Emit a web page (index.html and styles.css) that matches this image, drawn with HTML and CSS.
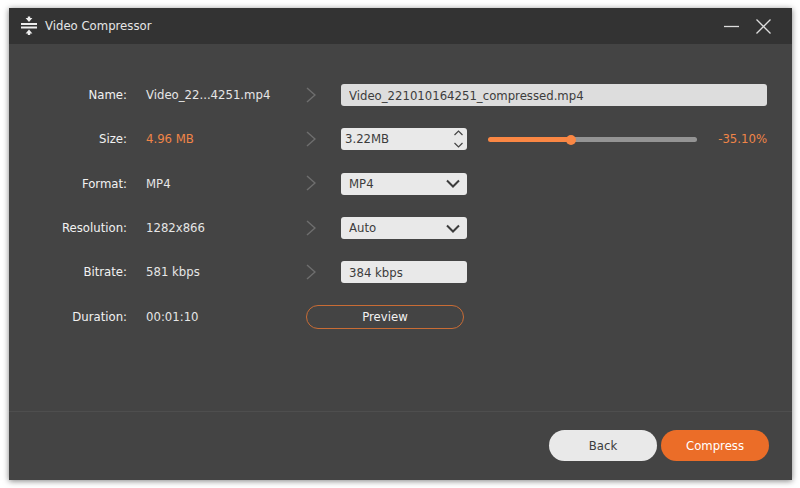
FILE: index.html
```html
<!DOCTYPE html>
<html lang="en">
	<head>
		<meta charset="utf-8">
		<meta name="viewport" content="width=device-width, initial-scale=1">
		<title>Video Compressor</title>
		<link rel="stylesheet" href="styles.css">
	</head>
	<body>
		<div class="window">
			<header class="titlebar">
				<svg class="logo" width="16" height="20" viewBox="0 0 16 20">
					<path d="M0 7h16v2H0zM0 10.6h16v2H0z"/>
					<path d="M6.800 .5h2.400v1.500h2.200L8 6 4.600 2H6.800zM6.800 19h2.400v-1.500h2.200L8 13.500 4.600 17.500H6.800z"/>
				</svg>
				<h1>Video Compressor</h1>
				<button type="button" class="winbtn" aria-label="Minimize">
					<svg width="16" height="16" viewBox="0 0 16 16"><path d="M1 8.500h15"/></svg>
				</button>
				<button type="button" class="winbtn" aria-label="Close">
					<svg width="16" height="16" viewBox="0 0 16 16"><path d="M1.500 1.500l14 14M15.500 1.500l-14 14"/></svg>
				</button>
			</header>

			<main class="settings">
				<div class="row">
					<label class="name" for="filename">Name:</label>
					<span class="value">Video_22...4251.mp4</span>
					<svg class="arrow" width="10" height="17" viewBox="0 0 10 17"><path d="M1 1l8 7L1 15"/></svg>
					<input class="field filename" id="filename" type="text" value="Video_221010164251_compressed.mp4">
				</div>

				<div class="row">
					<label class="name" for="size">Size:</label>
					<span class="value accent">4.96 MB</span>
					<svg class="arrow" width="10" height="17" viewBox="0 0 10 17"><path d="M1 1l8 7L1 15"/></svg>
					<div class="field spinner">
						<input id="size" type="text" value="3.22MB">
						<div class="steps">
							<button type="button" aria-label="Increase size"><svg width="9" height="6" viewBox="0 0 9 6"><path d="M.5 5l4-4 4 4"/></svg></button>
							<button type="button" aria-label="Decrease size"><svg width="9" height="6" viewBox="0 0 9 6"><path d="M.5 1l4 4 4-4"/></svg></button>
						</div>
					</div>
					<div class="ratio">
						<input id="ratio" type="range" min="0" max="100" value="39" aria-label="Compression ratio">
						<output class="accent" for="ratio">-35.10%</output>
					</div>
				</div>

				<div class="row">
					<label class="name" for="format">Format:</label>
					<span class="value">MP4</span>
					<svg class="arrow" width="10" height="17" viewBox="0 0 10 17"><path d="M1 1l8 7L1 15"/></svg>
					<div class="dropdown">
						<select class="field" id="format"><option>MP4</option></select>
						<svg width="14" height="9" viewBox="0 0 14 9"><path d="M1 1.500l6 6 6-6"/></svg>
					</div>
				</div>

				<div class="row">
					<label class="name" for="resolution">Resolution:</label>
					<span class="value">1282x866</span>
					<svg class="arrow" width="10" height="17" viewBox="0 0 10 17"><path d="M1 1l8 7L1 15"/></svg>
					<div class="dropdown">
						<select class="field" id="resolution"><option>Auto</option></select>
						<svg width="14" height="9" viewBox="0 0 14 9"><path d="M1 1.500l6 6 6-6"/></svg>
					</div>
				</div>

				<div class="row">
					<label class="name" for="bitrate">Bitrate:</label>
					<span class="value">581 kbps</span>
					<svg class="arrow" width="10" height="17" viewBox="0 0 10 17"><path d="M1 1l8 7L1 15"/></svg>
					<input class="field" id="bitrate" type="text" value="384 kbps">
				</div>

				<div class="row">
					<span class="name">Duration:</span>
					<span class="value">00:01:10</span>
					<button type="button" class="preview">Preview</button>
				</div>
			</main>

			<footer class="actions">
				<button type="button" class="pill">Back</button>
				<button type="button" class="pill primary">Compress</button>
			</footer>
		</div>
	</body>
</html>
```
FILE: styles.css
```css
* { box-sizing: border-box; }
body {
	margin: 0;
	padding: 8px 8px 8px 9px;
	background: #fff;
	font: 13px/18px "DejaVu Sans Condensed", "Noto Sans", sans-serif;
	color: #e6e6e6;
}
button, input, select { font: inherit; color: inherit; margin: 0; }
button { padding: 0; border: 0; background: none; cursor: pointer; }
svg { display: block; fill: none; }

.window {
	display: flex;
	flex-direction: column;
	min-height: calc(100vh - 16px);
	background: #444;
	box-shadow: 0 1px 6px rgba(0, 0, 0, .5);
}

/* title bar */
.titlebar {
	display: flex;
	align-items: center;
	gap: 16px;
	height: 36px;
	padding: 0 21px 0 12px;
	background: #333;
}
.logo { fill: #eee; }
.titlebar h1 { flex: 1; margin: 0 0 0 -8px; font-size: 13px; font-weight: normal; }
.winbtn svg { stroke: #ddd; stroke-width: 1.3; }

/* settings */
.settings {
	flex: 1;
	display: grid;
	grid-auto-rows: 1fr;
	padding: 29px 25px 72px 0;
}
.row {
	display: grid;
	grid-template-columns: 118px 19px 160px 35px 126px 1fr;
	align-items: center;
}
.name { color: #f2f2f2; text-align: right; }
.value { grid-column: 3; }
.accent { color: #f08548; }
.arrow { stroke: #6e6e6e; stroke-width: 1.5; }

.field {
	width: 100%;
	height: 22px;
	padding: 0 8px;
	border: 0;
	border-radius: 3px;
	background: #e9e9e9;
	color: #3c3c3c;
}
.filename { grid-column: 5 / -1; background: #ddd; }

.spinner { display: flex; align-items: center; padding: 0 4px; }
.spinner input { flex: 1; min-width: 0; padding: 0; border: 0; background: none; }
.steps { display: flex; flex-direction: column; gap: 6px; }
.steps svg { stroke: #444; stroke-width: 1.2; }

.dropdown { display: grid; align-items: center; }
.dropdown > * { grid-area: 1 / 1; }
.dropdown select { appearance: none; }
.dropdown svg {
	justify-self: end;
	margin-right: 7px;
	stroke: #3c3c3c;
	stroke-width: 2;
	pointer-events: none;
}

.ratio { display: flex; align-items: center; gap: 21px; padding-left: 21px; }
.ratio input {
	flex: 1;
	min-width: 0;
	height: 10px;
	appearance: none;
	background: none;
}
.ratio input::-webkit-slider-runnable-track {
	height: 5px;
	border-radius: 3px;
	background: linear-gradient(to right, #fa8744 40%, #949494 40%);
}
.ratio input::-webkit-slider-thumb {
	appearance: none;
	width: 10px;
	height: 10px;
	margin-top: -2px;
	border-radius: 50%;
	background: #fa8744;
}

.preview {
	grid-column: 4 / 6;
	width: 158px;
	height: 24px;
	border: 1px solid #c96c35;
	border-radius: 12px;
	color: #f2f2f2;
}

/* bottom buttons */
.actions {
	display: flex;
	justify-content: flex-end;
	gap: 4px;
	padding: 18px 23px 19px;
	border-top: 1px solid #4e4e4e;
}
.pill {
	width: 108px;
	height: 31px;
	border-radius: 16px;
	background: #e9e9e9;
	color: #3c3c3c;
}
.pill.primary { background: #eb6d28; color: #fff; }
```
